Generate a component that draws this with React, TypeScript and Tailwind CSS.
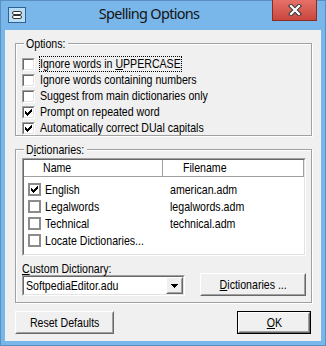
import React from "react";

function T({ children, center = false, className = "" }: { children: React.ReactNode; center?: boolean; className?: string }) {
  return (
    <span
      className={`inline-block whitespace-nowrap scale-x-[0.815] ${center ? "origin-center" : "origin-left"} ${className}`}
    >
      {children}
    </span>
  );
}

function Check() {
  return (
    <svg width="7" height="7" viewBox="0 0 7 7" shapeRendering="crispEdges" fill="#000" className="block">
      <rect x="0" y="2" width="1" height="3" />
      <rect x="1" y="3" width="1" height="3" />
      <rect x="2" y="4" width="1" height="3" />
      <rect x="3" y="3" width="1" height="3" />
      <rect x="4" y="2" width="1" height="3" />
      <rect x="5" y="1" width="1" height="3" />
      <rect x="6" y="0" width="1" height="3" />
    </svg>
  );
}

function Box({ checked }: { checked?: boolean }) {
  return (
    <div className="w-[13px] h-[13px] shrink-0 border border-t-[#a0a0a0] border-l-[#a0a0a0] border-b-white border-r-white">
      <div className="w-full h-full border border-t-[#696969] border-l-[#696969] border-b-[#e3e3e3] border-r-[#e3e3e3] bg-white flex items-center justify-center">
        {checked && <Check />}
      </div>
    </div>
  );
}

function ListBox({ checked }: { checked?: boolean }) {
  return (
    <div className="w-[13px] h-[13px] shrink-0 border-2 border-[#8c8c8c] bg-white flex items-center justify-center">
      {checked && <Check />}
    </div>
  );
}

function Raised({ className = "", children }: { className?: string; children?: React.ReactNode }) {
  return (
    <div className={`border border-t-white border-l-white border-b-[#696969] border-r-[#696969] bg-[#f0f0f0] ${className}`}>
      <div className="w-full h-full border border-t-[#f0f0f0] border-l-[#f0f0f0] border-b-[#a0a0a0] border-r-[#a0a0a0] flex items-center justify-center">
        {children}
      </div>
    </div>
  );
}

function Group({ label, labelW, className = "", children }: { label: React.ReactNode; labelW: string; className?: string; children?: React.ReactNode }) {
  return (
    <div className={`relative border border-[#a0a0a0] shadow-[inset_1px_1px_0_#fff,1px_1px_0_#fff] ${className}`}>
      <span className={`absolute left-[8px] top-[-8px] px-[2px] bg-[#f0f0f0] leading-[15px] ${labelW}`}>
        <T>{label}</T>
      </span>
      {children}
    </div>
  );
}

function SysIcon() {
  return (
    <svg width="18" height="16" viewBox="0 0 18 16" className="block">
      <rect x="0.5" y="0.5" width="17" height="15" fill="#b9dcf6" stroke="#2f6090" />
      <rect x="4.5" y="4.5" width="9" height="3" rx="1.5" fill="#fff" stroke="#333" />
      <rect x="4.5" y="8.5" width="9" height="3" rx="1.5" fill="#fff" stroke="#333" />
    </svg>
  );
}

function CloseBtn() {
  return (
    <div className="w-[45px] h-[21px] -mt-[1px] mr-[4px] bg-linear-to-b from-[#e6716a] to-[#c8463d] border border-t-0 border-[#8a2b26] flex items-center justify-center">
      <svg width="14" height="12" viewBox="0 0 14 12" className="block">
        <path d="M3 2 L11 10 M11 2 L3 10" stroke="#3a3a3a" strokeWidth="4.2" strokeLinecap="square" fill="none" />
        <path d="M3 2 L11 10 M11 2 L3 10" stroke="#fff" strokeWidth="2.2" strokeLinecap="square" fill="none" />
      </svg>
    </div>
  );
}

function Row({ checked, children }: { checked?: boolean; children: React.ReactNode }) {
  return (
    <div className="h-[16px] flex items-center gap-[4px]">
      <Box checked={checked} />
      {children}
    </div>
  );
}

function ListRow({ checked, name, file }: { checked?: boolean; name: string; file?: string }) {
  return (
    <div className="h-[17px] flex items-center pl-[4px]">
      <ListBox checked={checked} />
      <span className="ml-[4px] w-[125px] leading-[15px]">
        <T>{name}</T>
      </span>
      {file && (
        <span className="leading-[15px]">
          <T>{file}</T>
        </span>
      )}
    </div>
  );
}

export default function App() {
  return (
    <div className="w-[326px] h-[346px] bg-[#79b6e9] border border-[#5b8fc2] flex flex-col px-[4px] pb-[4px] font-['Liberation_Sans',Arial,sans-serif] text-[13px] text-black">
      <div className="h-[29px] flex items-start shrink-0">
        <div className="mt-[6px] ml-[3px]">
          <SysIcon />
        </div>
        <div className="flex-1 text-center pt-[2px] font-['Noto_Sans',sans-serif] text-[14.5px] tracking-[-0.7px] leading-[20px] text-[#141414]">
          Spelling Options
        </div>
        <CloseBtn />
      </div>
      <div className="flex-1 bg-[#f0f0f0] flex flex-col">
        <Group label="Options:" labelW="w-[44px]" className="mt-[13px] ml-[10px] w-[297px] h-[93px] shrink-0">
          <div className="pt-[12px] pl-[6px] flex flex-col">
            <Row>
              <span className="w-[143px] h-[16px] border border-dotted border-black leading-[14px]">
                <T>
                  Ignore words in <span className="underline">U</span>PPERCASE
                </T>
              </span>
            </Row>
            <Row>
              <span className="border border-transparent leading-[14px]">
                <T>Ignore words containing numbers</T>
              </span>
            </Row>
            <Row>
              <span className="border border-transparent leading-[14px]">
                <T>Suggest from main dictionaries only</T>
              </span>
            </Row>
            <Row checked>
              <span className="border border-transparent leading-[14px]">
                <T>Prompt on repeated word</T>
              </span>
            </Row>
            <Row checked>
              <span className="border border-transparent leading-[14px]">
                <T>Automatically correct DUal capitals</T>
              </span>
            </Row>
          </div>
        </Group>

        <Group
          label={
            <>
              D<span className="underline">i</span>ctionaries:
            </>
          }
          labelW="w-[63px]"
          className="mt-[13px] ml-[10px] w-[297px] shrink-0"
        >
          <div className="pt-[8px] pl-[6px] pb-[6px] flex flex-col">
            <div className="w-[284px] h-[98px] border border-t-[#a0a0a0] border-l-[#a0a0a0] border-b-white border-r-white">
              <div className="w-full h-full border border-t-[#696969] border-l-[#696969] border-b-[#e3e3e3] border-r-[#e3e3e3] bg-white flex flex-col">
                <div className="h-[17px] flex shrink-0">
                  <div className="w-[139px] h-full border-b border-r border-[#a0a0a0] pl-[19px] flex items-center">
                    <T>Name</T>
                  </div>
                  <div className="w-[141px] h-full border-b border-r border-[#a0a0a0] pl-[20px] flex items-center">
                    <T>Filename</T>
                  </div>
                </div>
                <div className="pt-[4px] flex flex-col">
                  <ListRow checked name="English" file="american.adm" />
                  <ListRow name="Legalwords" file="legalwords.adm" />
                  <ListRow name="Technical" file="technical.adm" />
                  <ListRow name="Locate Dictionaries..." />
                </div>
              </div>
            </div>
            <div className="mt-[6px] flex items-end">
              <div className="flex flex-col">
                <div className="h-[13px] leading-[13px]">
                  <T>
                    <span className="underline">C</span>ustom Dictionary:
                  </T>
                </div>
                <div className="w-[163px] h-[21px] border border-t-[#a0a0a0] border-l-[#a0a0a0] border-b-white border-r-white">
                  <div className="w-full h-full border border-t-[#696969] border-l-[#696969] border-b-[#e3e3e3] border-r-[#e3e3e3] bg-white flex items-center">
                    <span className="flex-1 pl-[2px] leading-[15px]">
                      <T>SoftpediaEditor.adu</T>
                    </span>
                    <Raised className="w-[17px] h-full">
                      <svg width="7" height="4" viewBox="0 0 7 4" className="block" shapeRendering="crispEdges">
                        <path d="M0 0 H7 L3.5 4 Z" fill="#000" />
                      </svg>
                    </Raised>
                  </div>
                </div>
              </div>
              <Raised className="ml-[15px] w-[106px] h-[23px]">
                <T center>
                  <span className="underline">D</span>ictionaries ...
                </T>
              </Raised>
            </div>
          </div>
        </Group>

        <div className="mt-[8px] flex shrink-0">
          <Raised className="ml-[10px] w-[99px] h-[23px]">
            <T center>Reset Defaults</T>
          </Raised>
          <div className="ml-auto mr-[10px] w-[74px] h-[23px] border border-black">
            <Raised className="w-full h-full">
              <T center>
                <span className="underline">O</span>K
              </T>
            </Raised>
          </div>
        </div>
      </div>
    </div>
  );
}
